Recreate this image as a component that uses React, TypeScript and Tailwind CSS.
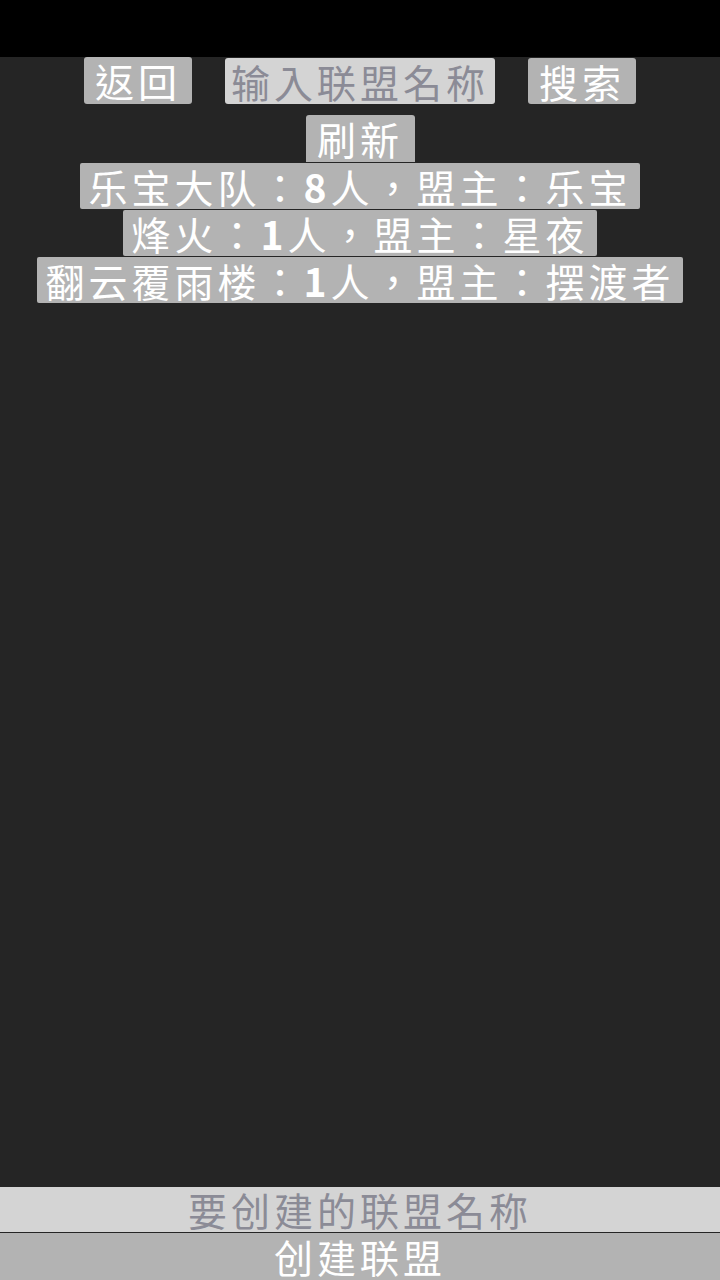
import { useState } from 'react'

interface Alliance {
  name: string
  count: number
  leader: string
  width: string
}

const alliances: Alliance[] = [
  { name: '乐宝大队', count: 8, leader: '乐宝', width: 'w-[560px]' },
  { name: '烽火', count: 1, leader: '星夜', width: 'w-[474px]' },
  { name: '翻云覆雨楼', count: 1, leader: '摆渡者', width: 'w-[646px]' },
]

const font = "font-['Noto_Sans_CJK_TC','Noto_Sans_CJK_SC',sans-serif]"

export default function App() {
  const [query, setQuery] = useState('')
  const [newName, setNewName] = useState('')

  return (
    <div className={`flex h-screen w-full flex-col bg-[#252525] ${font} text-[39px] tracking-[4px]`}>
      {/* status bar */}
      <div className="h-[57px] shrink-0 bg-black" />

      <div className="flex flex-1 flex-col items-center">
        {/* search row */}
        <div className="flex items-center gap-[33px]">
          <button className="h-[47px] w-[108px] rounded-[3px] bg-[#b3b3b3] leading-[47px] text-white">
            返回
          </button>
          <input
            value={query}
            onChange={(e) => setQuery(e.target.value)}
            placeholder="输入联盟名称"
            className="h-[46px] w-[270px] rounded-[3px] bg-[#d4d4d4] text-center leading-[46px] text-[#555] outline-none placeholder:text-[#8b8b96]"
          />
          <button className="h-[46px] w-[108px] rounded-[3px] bg-[#b3b3b3] leading-[46px] text-white">
            搜索
          </button>
        </div>

        <button className="mt-[11px] h-[47px] w-[109px] rounded-t-[3px] bg-[#b3b3b3] leading-[47px] text-white">
          刷新
        </button>

        {/* alliance list */}
        {alliances.map((a) => (
          <div
            key={a.name}
            className={`mt-px h-[46px] ${a.width} rounded-[2px] bg-[#b3b3b3] text-center leading-[46px] text-white`}
          >
            {a.name}：<span className="font-bold">{a.count}</span>人，盟主：{a.leader}
          </div>
        ))}
      </div>

      {/* create */}
      <input
        value={newName}
        onChange={(e) => setNewName(e.target.value)}
        placeholder="要创建的联盟名称"
        className="h-[45px] w-full shrink-0 bg-[#d4d4d4] text-center leading-[45px] text-[#555] outline-none placeholder:text-[#8b8b96]"
      />
      <button className="mt-px h-[47px] w-full shrink-0 bg-[#b3b3b3] leading-[47px] text-white">
        创建联盟
      </button>
    </div>
  )
}
